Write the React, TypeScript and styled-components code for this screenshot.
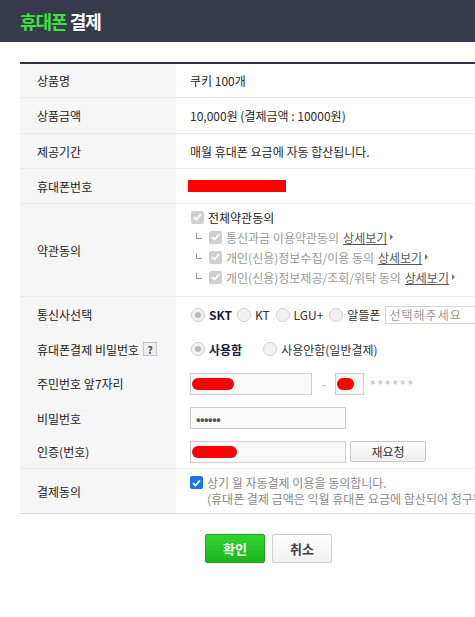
import styled, { createGlobalStyle } from "styled-components";

const Global = createGlobalStyle`
  html, body {
    margin: 0;
    padding: 0;
    background: #fff;
    overflow: hidden;
  }
  body {
    font-family: "Noto Sans CJK KR", "Noto Sans", sans-serif;
    font-size: 12px;
    color: #222;
  }
`;

const Header = styled.div`
  height: 42px;
  background: #363b4c;
  display: flex;
  align-items: center;
  padding-left: 20px;
  font-size: 18px;
  font-weight: bold;
  letter-spacing: -1px;
  color: #fff;
`;
const Green = styled.span`
  color: #3ee43e;
  margin-right: 3px;
`;

const Table = styled.div`
  margin: 20px 0 0 20px;
  width: 560px;
  border-top: 2px solid #2f3242;
  border-bottom: 1px solid #dcdcdc;
`;

const Row = styled.div<{ $h: number; $line?: boolean }>`
  display: grid;
  grid-template-columns: 156px 1fr;
  height: ${(p) => p.$h}px;
  border-bottom: ${(p) => (p.$line ? "1px solid #e9e9e9" : "none")};
`;
const Label = styled.div<{ $top?: number }>`
  background: #f6f6f6;
  padding-left: 17px;
  display: flex;
  align-items: ${(p) => (p.$top !== undefined ? "flex-start" : "center")};
  padding-top: ${(p) => p.$top ?? 0}px;
  color: #222;
  white-space: nowrap;
`;
const Value = styled.div<{ $top?: number }>`
  padding-left: 14px;
  display: flex;
  align-items: ${(p) => (p.$top !== undefined ? "flex-start" : "center")};
  padding-top: ${(p) => p.$top ?? 0}px;
  color: #2a2a2a;
  white-space: nowrap;
`;

const Group = styled.div`
  border-bottom: 1px solid #e9e9e9;
`;

const Redact = styled.span<{ $w: number; $h: number; $r: number }>`
  display: inline-block;
  width: ${(p) => p.$w}px;
  height: ${(p) => p.$h}px;
  border-radius: ${(p) => p.$r}px;
  background: #ff0000;
`;

const Terms = styled.div`
  display: flex;
  flex-direction: column;
`;
const TermLine = styled.div<{ $sub?: boolean }>`
  display: flex;
  align-items: center;
  height: 20px;
  padding-left: ${(p) => (p.$sub ? 6 : 1)}px;
  color: ${(p) => (p.$sub ? "#9a9a9a" : "#222")};
`;
const Corner = styled.span`
  display: inline-block;
  width: 5px;
  height: 5px;
  border-left: 1px solid #999;
  border-bottom: 1px solid #999;
  margin-right: 7px;
  margin-top: -2px;
`;
const Box = styled.span<{ $color: string }>`
  display: inline-flex;
  align-items: center;
  justify-content: center;
  width: 13px;
  height: 13px;
  border-radius: 2px;
  background: ${(p) => p.$color};
  margin-right: 4px;
  flex: none;
`;
const More = styled.span`
  color: #555;
  text-decoration: underline;
  margin-left: 4px;
`;
const Arrow = styled.span`
  display: inline-block;
  width: 0;
  height: 0;
  border-top: 3px solid transparent;
  border-bottom: 3px solid transparent;
  border-left: 3px solid #777;
  margin-left: 3px;
`;

const Radio = styled.span<{ $on?: boolean; $gap: number }>`
  display: inline-flex;
  align-items: center;
  justify-content: center;
  width: 12px;
  height: 12px;
  border-radius: 50%;
  border: 1px solid #cfcfcf;
  background: #f1f1f1;
  margin-right: 4px;
  margin-left: ${(p) => p.$gap}px;
  &::after {
    content: "";
    width: 6px;
    height: 6px;
    border-radius: 50%;
    background: ${(p) => (p.$on ? "#b9b9b9" : "transparent")};
  }
`;
const Opt = styled.span<{ $bold?: boolean }>`
  font-weight: ${(p) => (p.$bold ? "bold" : "normal")};
  color: ${(p) => (p.$bold ? "#1c1c3c" : "#333")};
`;
const Select = styled.span`
  display: inline-flex;
  align-items: center;
  height: 16px;
  margin-left: 5px;
  padding: 0 6px 0 3px;
  border: 1px solid #d6d6d6;
  color: #9a9a9a;
  letter-spacing: 1px;
  width: 120px;
`;
const Help = styled.span`
  display: inline-flex;
  align-items: center;
  justify-content: center;
  width: 12px;
  height: 12px;
  margin-left: 4px;
  border: 1px solid #c4c4c4;
  background: #eee;
  color: #444;
  font-size: 10px;
  font-weight: bold;
`;

const Input = styled.div<{ $w: number }>`
  width: ${(p) => p.$w}px;
  height: 20px;
  box-sizing: content-box;
  border: 1px solid #cfcfcf;
  background: #f9f9f9;
  display: flex;
  align-items: center;
  padding-left: 1px;
  flex: none;
`;
const Dash = styled.span`
  color: #aaa;
  margin: 0 9px 0 10px;
`;
const Stars = styled.span`
  font-family: "DejaVu Sans", sans-serif;
  color: #b0b0b0;
  font-size: 10px;
  letter-spacing: 2.5px;
  margin-left: 6px;
  padding-top: 2px;
`;
const Dots = styled.span`
  color: #555;
  font-size: 12px;
  font-weight: bold;
  letter-spacing: -0.5px;
  margin-left: 4px;
`;
const SmallBtn = styled.button`
  margin-left: 4px;
  width: 76px;
  height: 21px;
  border: 1px solid #c9c9c9;
  border-radius: 2px;
  background: linear-gradient(#fdfdfd, #efefef);
  font-family: inherit;
  font-size: 12px;
  color: #333;
  padding: 0;
`;
const AgreeText = styled.div`
  display: flex;
  flex-direction: column;
  color: #8a8a8a;
  line-height: 16px;
`;

const Buttons = styled.div`
  display: flex;
  gap: 7px;
  margin: 20px 0 0 205px;
`;
const Btn = styled.button<{ $primary?: boolean }>`
  width: 60px;
  height: 29px;
  padding: 0;
  border-radius: 2px;
  font-family: inherit;
  font-size: 13px;
  font-weight: bold;
  border: 1px solid ${(p) => (p.$primary ? "#1ea41e" : "#cfcfcf")};
  color: ${(p) => (p.$primary ? "#fff" : "#444")};
  background: ${(p) =>
    p.$primary
      ? "linear-gradient(#2fd62f, #1fb51f)"
      : "linear-gradient(#ffffff, #f0f0f0)"};
`;

const Check = () => (
  <svg width="9" height="8" viewBox="0 0 9 8">
    <path d="M1 4.2 L3.4 6.5 L8 1.3" stroke="#fff" strokeWidth="1.8" fill="none" />
  </svg>
);

function Term({ text }: { text: string }) {
  return (
    <TermLine $sub>
      <Corner />
      <Box $color="#d0d0d0">
        <Check />
      </Box>
      {text}
      <More>상세보기</More>
      <Arrow />
    </TermLine>
  );
}

export default function App() {
  return (
    <>
      <Global />
      <Header>
        <Green>휴대폰</Green>결제
      </Header>
      <Table>
        <Row $h={33} $line>
          <Label>상품명</Label>
          <Value>쿠키 100개</Value>
        </Row>
        <Row $h={35} $line>
          <Label>상품금액</Label>
          <Value>10,000원 (결제금액 : 10000원)</Value>
        </Row>
        <Row $h={34} $line>
          <Label>제공기간</Label>
          <Value>매월 휴대폰 요금에 자동 합산됩니다.</Value>
        </Row>
        <Row $h={34} $line>
          <Label>휴대폰번호</Label>
          <Value>
            <Redact $w={98} $h={12} $r={0} style={{ marginLeft: -2 }} />
          </Value>
        </Row>
        <Row $h={92} $line>
          <Label>약관동의</Label>
          <Value $top={3}>
            <Terms>
              <TermLine>
                <Box $color="#d0d0d0">
                  <Check />
                </Box>
                전체약관동의
              </TermLine>
              <Term text="통신과금 이용약관동의" />
              <Term text="개인(신용)정보수집/이용 동의" />
              <Term text="개인(신용)정보제공/조회/위탁 동의" />
            </Terms>
          </Value>
        </Row>
        <Group>
          <Row $h={35}>
            <Label>통신사선택</Label>
            <Value>
              <Radio $on $gap={1} />
              <Opt $bold>SKT</Opt>
              <Radio $gap={5} />
              <Opt>KT</Opt>
              <Radio $gap={6} />
              <Opt>LGU+</Opt>
              <Radio $gap={6} />
              <Opt>알뜰폰</Opt>
              <Select>선택해주세요</Select>
            </Value>
          </Row>
          <Row $h={34}>
            <Label>
              휴대폰결제 비밀번호<Help>?</Help>
            </Label>
            <Value>
              <Radio $on $gap={1} />
              <Opt $bold>사용함</Opt>
              <Radio $gap={21} />
              <Opt>사용안함(일반결제)</Opt>
            </Value>
          </Row>
          <Row $h={35}>
            <Label>주민번호 앞7자리</Label>
            <Value>
              <Input $w={119}>
                <Redact $w={42} $h={12} $r={6} />
              </Input>
              <Dash>-</Dash>
              <Input $w={26}>
                <Redact $w={17} $h={12} $r={6} />
              </Input>
              <Stars>******</Stars>
            </Value>
          </Row>
          <Row $h={34}>
            <Label>비밀번호</Label>
            <Value>
              <Input $w={153}>
                <Dots>••••••</Dots>
              </Input>
            </Value>
          </Row>
          <Row $h={33}>
            <Label>인증(번호)</Label>
            <Value>
              <Input $w={153}>
                <Redact $w={45} $h={12} $r={6} />
              </Input>
              <SmallBtn>재요청</SmallBtn>
            </Value>
          </Row>
        </Group>
        <Row $h={44}>
          <Label>결제동의</Label>
          <Value $top={6}>
            <Box $color="#1a73e8" style={{ marginTop: 1 }}>
              <Check />
            </Box>
            <AgreeText>
              <span>상기 월 자동결제 이용을 동의합니다.</span>
              <span>(휴대폰 결제 금액은 익월 휴대폰 요금에 합산되어 청구됩니다.</span>
            </AgreeText>
          </Value>
        </Row>
      </Table>
      <Buttons>
        <Btn $primary>확인</Btn>
        <Btn>취소</Btn>
      </Buttons>
    </>
  );
}
